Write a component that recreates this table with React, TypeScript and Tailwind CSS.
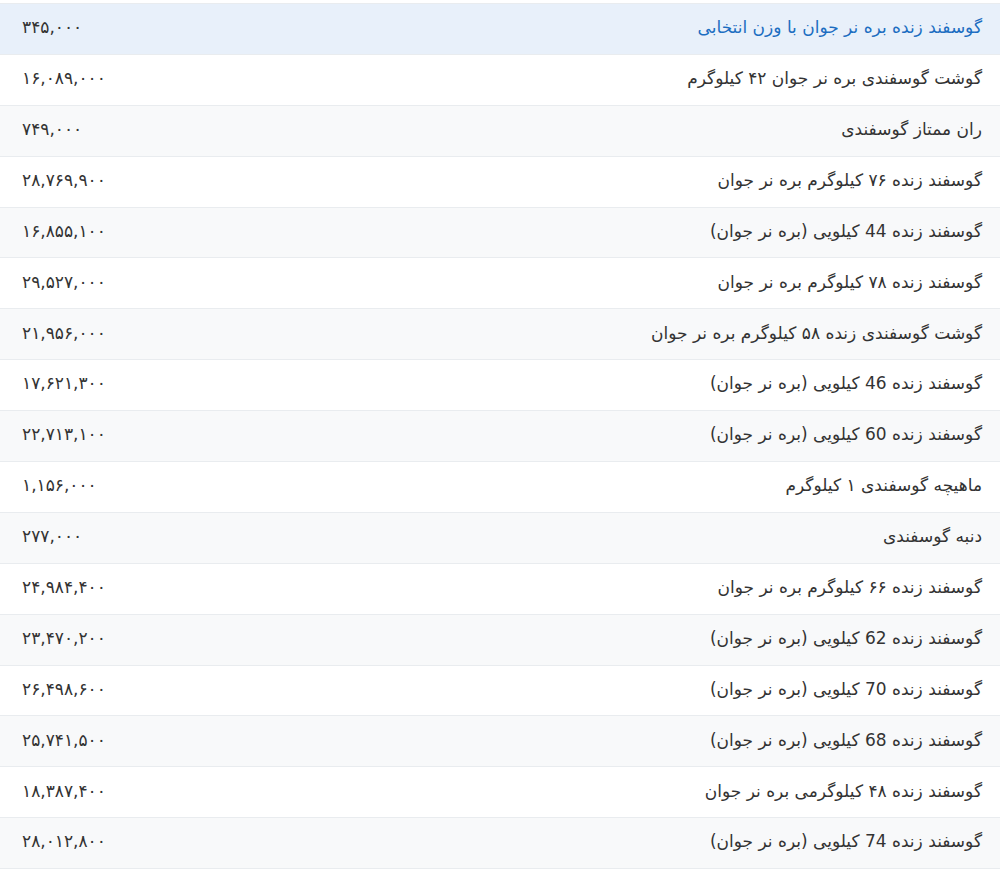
const rows: [string, string][] = [
  ['گوسفند زنده بره نر جوان با وزن انتخابی', '۳۴۵,۰۰۰'],
  ['گوشت گوسفندی بره نر جوان ۴۲ کیلوگرم', '۱۶,۰۸۹,۰۰۰'],
  ['ران ممتاز گوسفندی', '۷۴۹,۰۰۰'],
  ['گوسفند زنده ۷۶ کیلوگرم بره نر جوان', '۲۸,۷۶۹,۹۰۰'],
  ['گوسفند زنده 44 کیلویی (بره نر جوان)', '۱۶,۸۵۵,۱۰۰'],
  ['گوسفند زنده ۷۸ کیلوگرم بره نر جوان', '۲۹,۵۲۷,۰۰۰'],
  ['گوشت گوسفندی زنده ۵۸ کیلوگرم بره نر جوان', '۲۱,۹۵۶,۰۰۰'],
  ['گوسفند زنده 46 کیلویی (بره نر جوان)', '۱۷,۶۲۱,۳۰۰'],
  ['گوسفند زنده 60 کیلویی (بره نر جوان)', '۲۲,۷۱۳,۱۰۰'],
  ['ماهیچه گوسفندی ۱ کیلوگرم', '۱,۱۵۶,۰۰۰'],
  ['دنبه گوسفندی', '۲۷۷,۰۰۰'],
  ['گوسفند زنده ۶۶ کیلوگرم بره نر جوان', '۲۴,۹۸۴,۴۰۰'],
  ['گوسفند زنده 62 کیلویی (بره نر جوان)', '۲۳,۴۷۰,۲۰۰'],
  ['گوسفند زنده 70 کیلویی (بره نر جوان)', '۲۶,۴۹۸,۶۰۰'],
  ['گوسفند زنده 68 کیلویی (بره نر جوان)', '۲۵,۷۴۱,۵۰۰'],
  ['گوسفند زنده ۴۸ کیلوگرمی بره نر جوان', '۱۸,۳۸۷,۴۰۰'],
  ['گوسفند زنده 74 کیلویی (بره نر جوان)', '۲۸,۰۱۲,۸۰۰'],
];

export default function App() {
  return (
    <div dir="rtl" className="w-[1000px] bg-white pt-[3px] font-['DejaVu_Sans',sans-serif] text-[#333]">
      <div className="border-t border-[#e9ecef]">
        {rows.map(([name, price], i) => (
          <div
            key={i}
            className={
              'flex h-[50.9px] items-center justify-between border-b border-[#e9ecef] pb-[2px] pl-[22px] pr-[18px] ' +
              (i === 0 ? 'bg-[#e8f0fa]' : i % 2 === 0 ? 'bg-[#f8f9fa]' : 'bg-white')
            }
          >
            <span className={'text-[17px] ' + (i === 0 ? 'text-[#1b6dc1]' : '')}>{name}</span>
            <span dir="ltr" className="text-[17px]">{price}</span>
          </div>
        ))}
      </div>
    </div>
  );
}
